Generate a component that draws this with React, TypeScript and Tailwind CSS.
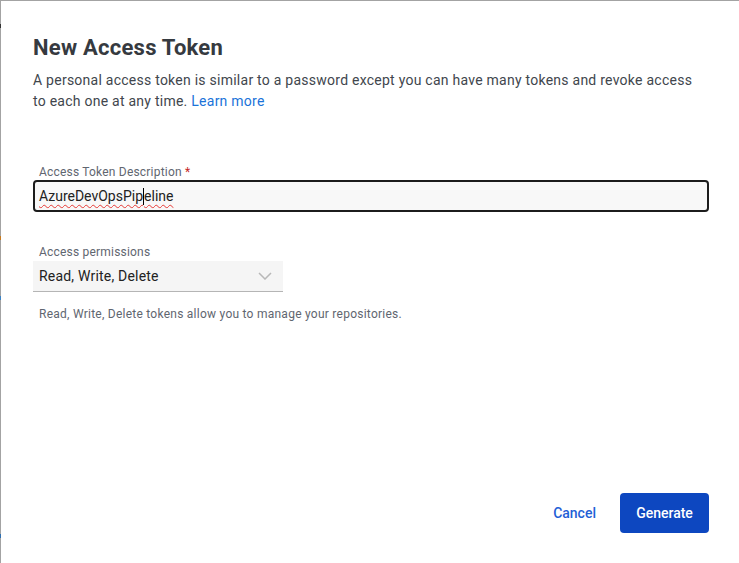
import React from 'react';

const edgeMarks = [
    { top: 'top-[24px]', color: 'bg-[#333]' },
    { top: 'top-[236px]', color: 'bg-[#c77a1e]' },
    { top: 'top-[296px]', color: 'bg-[#3b82c4]' },
    { top: 'top-[534px]', color: 'bg-[#2f6fb0]' },
];

export default function App() {
    return (
        <div className="relative w-[739px] h-[563px] bg-white overflow-hidden font-['Roboto',sans-serif]">
            {/* backdrop edges peeking behind the dialog */}
            <div className="absolute left-0 top-0 w-[1px] h-full bg-[#a3a3a3]" />
            <div className="absolute left-0 top-0 w-full h-[1px] bg-[#a3a3a3]" />
            {edgeMarks.map((m, i) => (
                <div key={i} className={`absolute left-0 w-[1px] h-[4px] ${m.top} ${m.color}`} />
            ))}

            <div className="h-full flex flex-col pl-[33px] pr-[30px] pt-[34px] pb-[30px]">
                <h2 className="text-[22px] leading-[28px] font-bold tracking-[0.25px] text-[#363a40]">New Access Token</h2>
                <p className="mt-[8px] text-[14px] leading-[21px] tracking-[0.25px] text-[#41464d] pr-[4px]">
                    A personal access token is similar to a password except you can have many tokens and revoke access to each one at any time.{' '}
                    <a className="text-[#1a73d9] cursor-pointer">Learn more</a>
                </p>

                <div className="mt-[52px]">
                    <label className="block pl-[6px] text-[12px] leading-[16px] tracking-[0.2px] text-[#5f6670]">
                        Access Token Description <span className="text-[#c62828]">*</span>
                    </label>
                    <div className="h-[32px] border-2 border-[#1c1c1c] rounded-[4px] bg-[#f8f8f8] flex items-center pl-[4px] text-[14px] text-[#222]">
                        <span className="underline decoration-wavy decoration-[#e53935] decoration-[1px] underline-offset-[3px]">
                            AzureDevOpsPip
                        </span>
                        <span className="w-[1px] h-[17px] bg-black" />
                        <span className="underline decoration-wavy decoration-[#e53935] decoration-[1px] underline-offset-[3px]">
                            eline
                        </span>
                    </div>
                </div>

                <div className="mt-[32px]">
                    <label className="block pl-[6px] text-[12px] leading-[16px] tracking-[0.2px] text-[#5f6670]">Access permissions</label>
                    <div className="mt-[1px] w-[250px] h-[31px] bg-[#f5f5f5] border-b border-[#b5b5b5] flex items-center justify-between pl-[6px] pr-[11px] text-[14px] tracking-[0.2px] text-[#222]">
                        <span>Read, Write, Delete</span>
                        <svg width="14" height="8" viewBox="0 0 14 8" fill="none">
                            <path d="M1 1l6 6 6-6" stroke="#b8b8b8" strokeWidth="1.5" />
                        </svg>
                    </div>
                    <p className="mt-[14px] pl-[6px] text-[12px] leading-[16px] tracking-[0.25px] text-[#5f6670]">
                        Read, Write, Delete tokens allow you to manage your repositories.
                    </p>
                </div>

                <div className="mt-auto flex items-center justify-end gap-[24px]">
                    <button className="text-[14px] font-medium text-[#1f5fd6] px-0">Cancel</button>
                    <button className="w-[89px] h-[40px] rounded-[4px] bg-[#0d47c0] text-white text-[14px] font-medium">
                        Generate
                    </button>
                </div>
            </div>
        </div>
    );
}
